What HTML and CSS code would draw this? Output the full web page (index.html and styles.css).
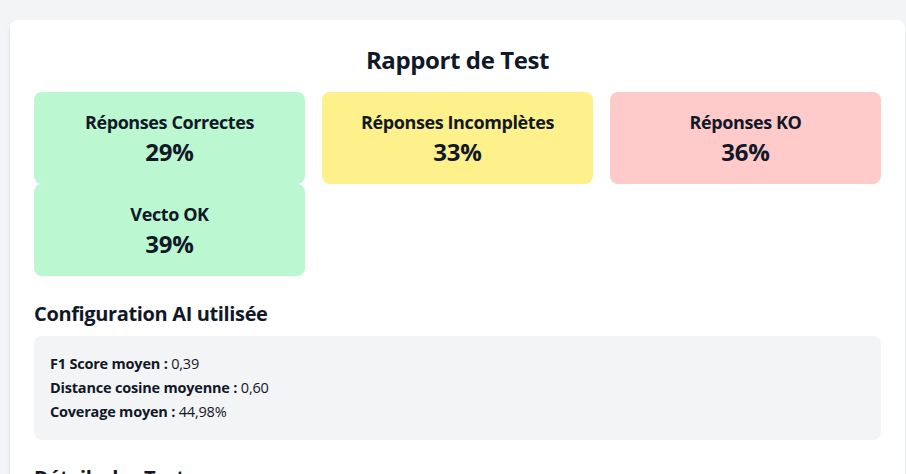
FILE: index.html
```html
<!DOCTYPE html>
<html lang="fr">
<head>
<meta charset="utf-8">
<title>Rapport de Test</title>
<link rel="stylesheet" href="styles.css">
</head>
<body>
<div class="report">
  <h1 class="title">Rapport de Test</h1>
  <div class="stats">
    <div class="stat stat-green"><div class="stat-label">Réponses Correctes</div><div class="stat-value">29%</div></div>
    <div class="stat stat-yellow"><div class="stat-label">Réponses Incomplètes</div><div class="stat-value">33%</div></div>
    <div class="stat stat-red"><div class="stat-label">Réponses KO</div><div class="stat-value">36%</div></div>
    <div class="stat stat-green"><div class="stat-label">Vecto OK</div><div class="stat-value">39%</div></div>
  </div>
  <h2 class="section-title">Configuration AI utilisée</h2>
  <div class="config">
    <p class="config-line"><strong>F1 Score moyen :</strong> 0,39</p>
    <p class="config-line"><strong>Distance cosine moyenne :</strong> 0,60</p>
    <p class="config-line"><strong>Coverage moyen :</strong> 44,98%</p>
  </div>
  <h2 class="section-title">Détails des Tests</h2>
</div>
</body>
</html>
```

FILE: styles.css
```css
html, body {
  margin: 0;
  padding: 0;
}
body {
  background: #f3f4f6;
  font-family: "Open Sans", "Noto Sans", sans-serif;
  color: #111827;
  padding: 20px 1px 0 10px;
  overflow: hidden;
}
.report {
  background: #ffffff;
  border-radius: 8px;
  box-shadow: 0 4px 6px -1px rgba(0,0,0,0.1), 0 2px 4px -2px rgba(0,0,0,0.1);
  padding: 24px;
  min-height: 600px;
}
.title {
  margin: 0 0 16px;
  font-size: 24px;
  line-height: 32px;
  font-weight: 700;
  letter-spacing: -0.4px;
  text-align: center;
}
.stats {
  display: grid;
  grid-template-columns: repeat(3, 1fr);
  column-gap: 17px;
  row-gap: 0;
}
.stat {
  border-radius: 8px;
  padding: 16px;
  text-align: center;
}
.stat-green { background: #bbf7d0; }
.stat-yellow { background: #fef08a; }
.stat-red { background: #fecaca; }
.stat-label {
  font-size: 18px;
  line-height: 28px;
  font-weight: 700;
  letter-spacing: -0.4px;
}
.stat-value {
  font-size: 24px;
  line-height: 32px;
  font-weight: 700;
  letter-spacing: -0.2px;
}
.section-title {
  margin: 24px 0 8px;
  font-size: 20px;
  line-height: 28px;
  font-weight: 700;
  letter-spacing: -0.36px;
}
.config {
  background: #f3f4f6;
  border-radius: 8px;
  padding: 16px;
}
.config-line {
  margin: 0;
  font-size: 14.5px;
  line-height: 24px;
  letter-spacing: -0.2px;
}
.config-line strong {
  font-weight: 700;
}
```
